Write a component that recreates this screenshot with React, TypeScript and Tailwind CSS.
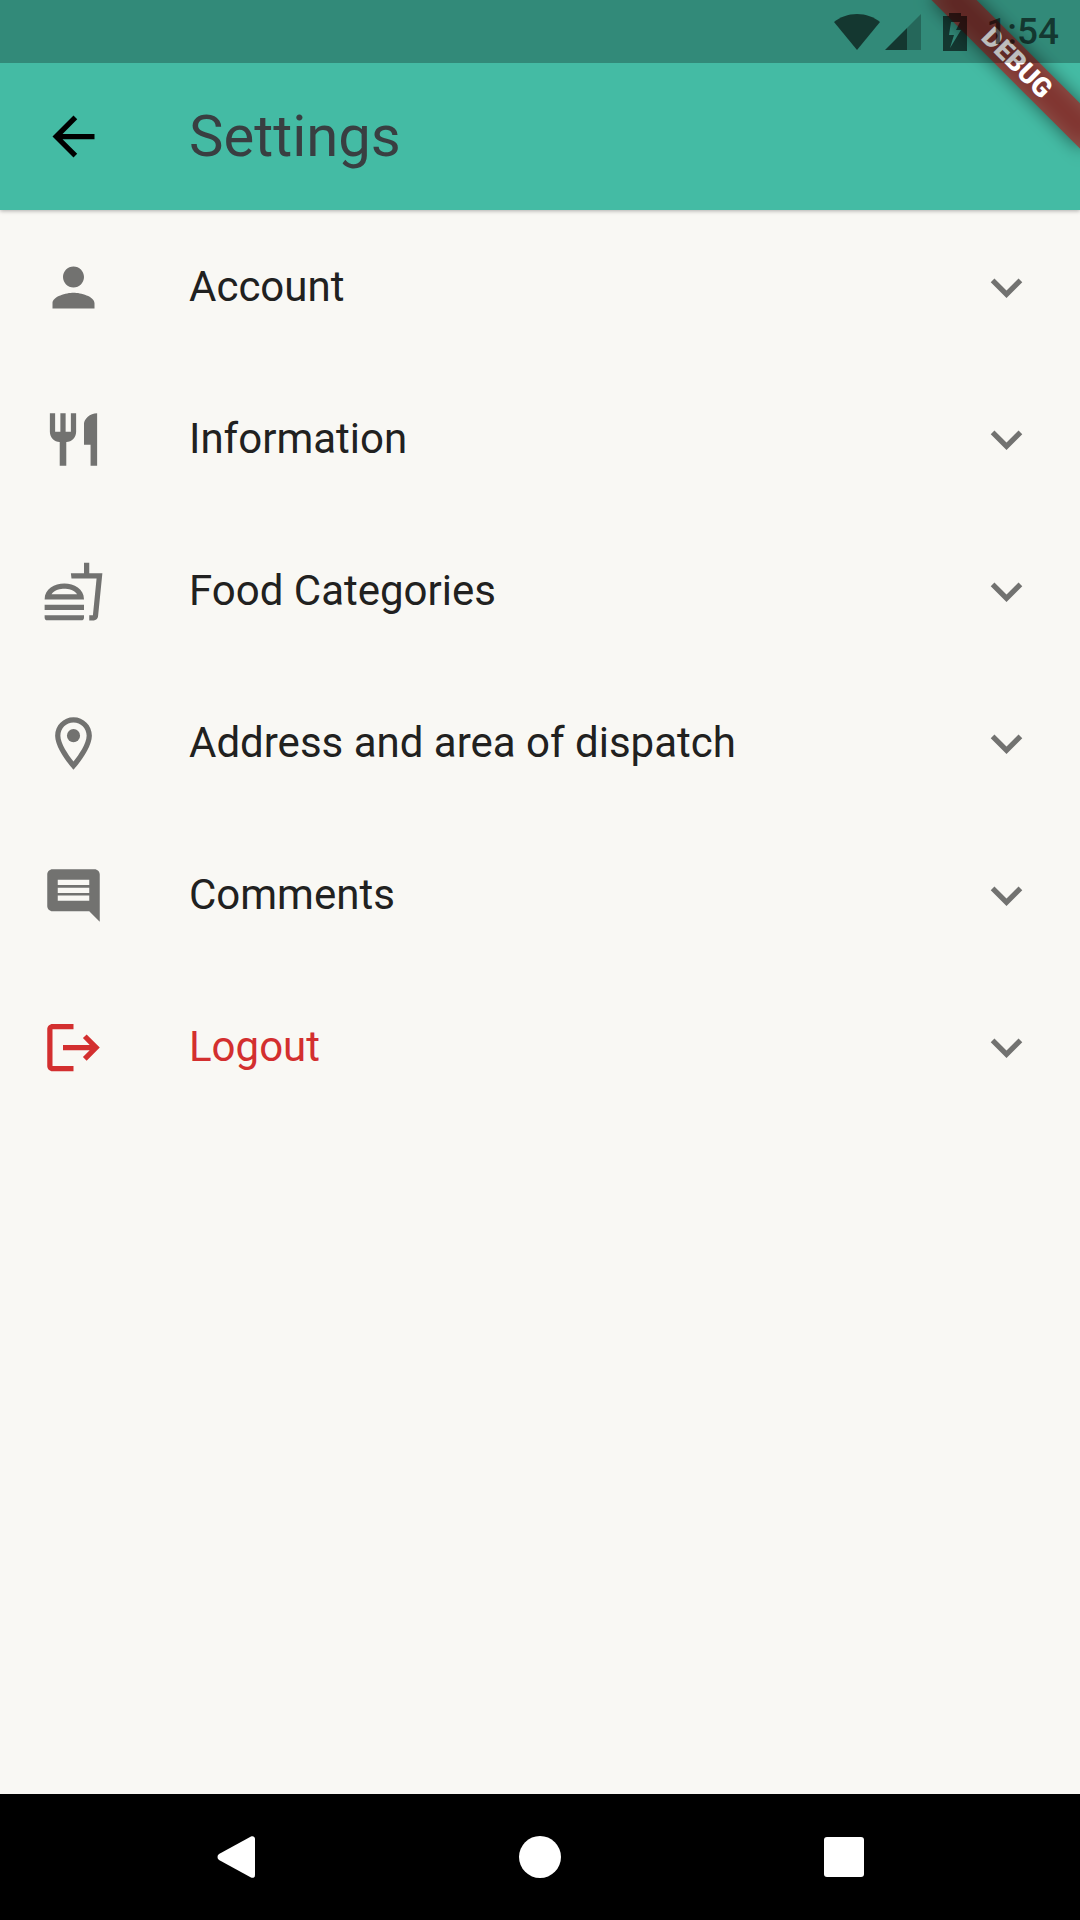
import type { ReactNode } from "react";

type IconProps = { children: ReactNode; className?: string };

function Icon({ children, className = "" }: IconProps) {
  return (
    <svg
      viewBox="0 0 24 24"
      fill="currentColor"
      aria-hidden="true"
      className={`size-[63px] shrink-0 ${className}`}
    >
      {children}
    </svg>
  );
}

const items: { label: string; icon: ReactNode; danger?: boolean }[] = [
  {
    label: "Account",
    icon: (
      <path d="M12 12c2.21 0 4-1.79 4-4s-1.79-4-4-4-4 1.79-4 4 1.79 4 4 4zm0 2c-2.67 0-8 1.34-8 4v2h16v-2c0-2.66-5.33-4-8-4z" />
    ),
  },
  {
    label: "Information",
    icon: (
      <path d="M11 9H9V2H7v7H5V2H3v7c0 2.12 1.66 3.84 3.75 3.97V22h2.5v-9.03C11.34 12.84 13 11.12 13 9V2h-2v7zm5-3v8h2.5v8H21V2c-2.76 0-5 2.24-5 4z" />
    ),
  },
  {
    label: "Food Categories",
    icon: (
      <path d="M1 21.98c0 .56.45 1.01 1.01 1.01H15c.56 0 1.01-.45 1.01-1.01V21H1v.98zM8.5 8.99C4.75 8.99 1 11 1 15h15c0-4-3.75-6.01-7.5-6.01zM3.62 13c1.11-1.55 3.47-2.01 4.88-2.01s3.77.46 4.88 2.01H3.62zM1 17h15v2H1zM18 5V1h-2v4h-5l.23 2h9.56l-1.4 14H18v2h1.72c.84 0 1.53-.65 1.63-1.47L23 5h-5z" />
    ),
  },
  {
    label: "Address and area of dispatch",
    icon: (
      <>
        <path d="M12 2C8.13 2 5 5.13 5 9c0 5.25 7 13 7 13s7-7.75 7-13c0-3.87-3.13-7-7-7zM7 9c0-2.76 2.24-5 5-5s5 2.24 5 5c0 2.88-2.88 7.19-5 9.88C9.92 16.21 7 11.85 7 9z" />
        <circle cx="12" cy="9" r="2.5" />
      </>
    ),
  },
  {
    label: "Comments",
    icon: (
      <path d="M20 2H4c-1.1 0-2 .9-2 2v12c0 1.1.9 2 2 2h14l4 4V4c0-1.1-.9-2-2-2zm-2 12H6v-2h12v2zm0-3H6V9h12v2zm0-3H6V6h12v2z" />
    ),
  },
  {
    label: "Logout",
    danger: true,
    icon: (
      <path d="M17 7l-1.41 1.41L18.17 11H8v2h10.17l-2.58 2.58L17 17l5-5zM4 5h8V3H4c-1.1 0-2 .9-2 2v14c0 1.1.9 2 2 2h8v-2H4V5z" />
    ),
  },
];

function DebugRibbon() {
  return (
    <div className="pointer-events-none absolute top-0 right-0 size-52 overflow-hidden">
      <div className="absolute top-[47px] right-[-42px] h-8 w-[210px] rotate-45">
        <div className="absolute inset-0 bg-black/50 blur-[9px]" />
        <div className="relative flex h-full items-center justify-center bg-[#b71c1c]/63 text-[27px] leading-none font-black text-white">
          DEBUG
        </div>
      </div>
    </div>
  );
}

function StatusBar() {
  return (
    <div className="relative flex h-[63px] items-center justify-end bg-black/26 pr-[21px] text-black/60">
      <svg viewBox="0 0 46 36" fill="currentColor" aria-hidden="true" className="mr-[5px] h-9 w-[46px]">
        <path d="M0 8C6 3 14 0 23 0s17 3 23 8L23 36z" />
      </svg>
      <svg viewBox="0 0 36 36" fill="currentColor" aria-hidden="true" className="mr-[22px] size-9">
        <path d="M36 0v36H22V14z" fillOpacity="0.42" />
        <path d="M22 14v22H0z" />
      </svg>
      <svg viewBox="0 0 24 38" fill="currentColor" aria-hidden="true" className="mr-[19px] h-[38px] w-6">
        <path fillRule="evenodd" d="M6 0h12v3h6v35H0V3h6zM8 9L6 22h5L7 35l11-18h-5l4-8z" />
      </svg>
      <span className="text-[37px] leading-[40px] font-medium">1:54</span>
    </div>
  );
}

export default function App() {
  return (
    <div className="flex min-h-screen flex-col bg-[#f9f8f4] font-['Roboto',sans-serif]">
      <header className="relative bg-[#44bba4] shadow-[0_1px_4px_rgba(0,0,0,0.3)]">
        <DebugRibbon />
        <StatusBar />
        <div className="flex h-[147px] items-center gap-[84px] px-[42px]">
          <button type="button" aria-label="Back" className="text-black">
            <Icon>
              <path d="M20 11H7.83l5.59-5.59L12 4l-8 8 8 8 1.41-1.41L7.83 13H20v-2z" />
            </Icon>
          </button>
          <h1 className="text-[58px] leading-[69px] text-[#393e41]">Settings</h1>
        </div>
      </header>

      <main className="flex-1 pt-px">
        <ul>
          {items.map(({ label, icon, danger }) => (
            <li key={label}>
              <button
                type="button"
                aria-expanded="false"
                className="flex h-[152px] w-full items-center gap-[84px] px-[42px] text-left"
              >
                <Icon className={danger ? "text-[#d32f2f]" : "text-[#727270]"}>{icon}</Icon>
                <span
                  className={`flex-1 text-[42px] leading-none ${danger ? "text-[#d32f2f]" : "text-[#212120]"}`}
                >
                  {label}
                </span>
                <Icon className="text-[#727270]">
                  <path d="M16.59 8.59L12 13.17 7.41 8.59 6 10l6 6 6-6z" />
                </Icon>
              </button>
            </li>
          ))}
        </ul>
      </main>

      <nav aria-label="System" className="grid h-[126px] grid-cols-3 bg-black px-[84px] text-white">
        <button type="button" aria-label="Back" className="flex items-center justify-center">
          <svg viewBox="0 0 42 42" fill="currentColor" aria-hidden="true" className="size-[42px]">
            <path d="M36 0.4C38 -0.4 40 0.6 40 3v36c0 2.400-2 3.400-4 2.600L4 24C2 22.500 2 19.500 4 18z" />
          </svg>
        </button>
        <button type="button" aria-label="Home" className="flex items-center justify-center">
          <span className="size-[42px] rounded-full bg-white" />
        </button>
        <button type="button" aria-label="Overview" className="flex items-center justify-center">
          <span className="size-10 rounded-[3px] bg-white" />
        </button>
      </nav>
    </div>
  );
}
